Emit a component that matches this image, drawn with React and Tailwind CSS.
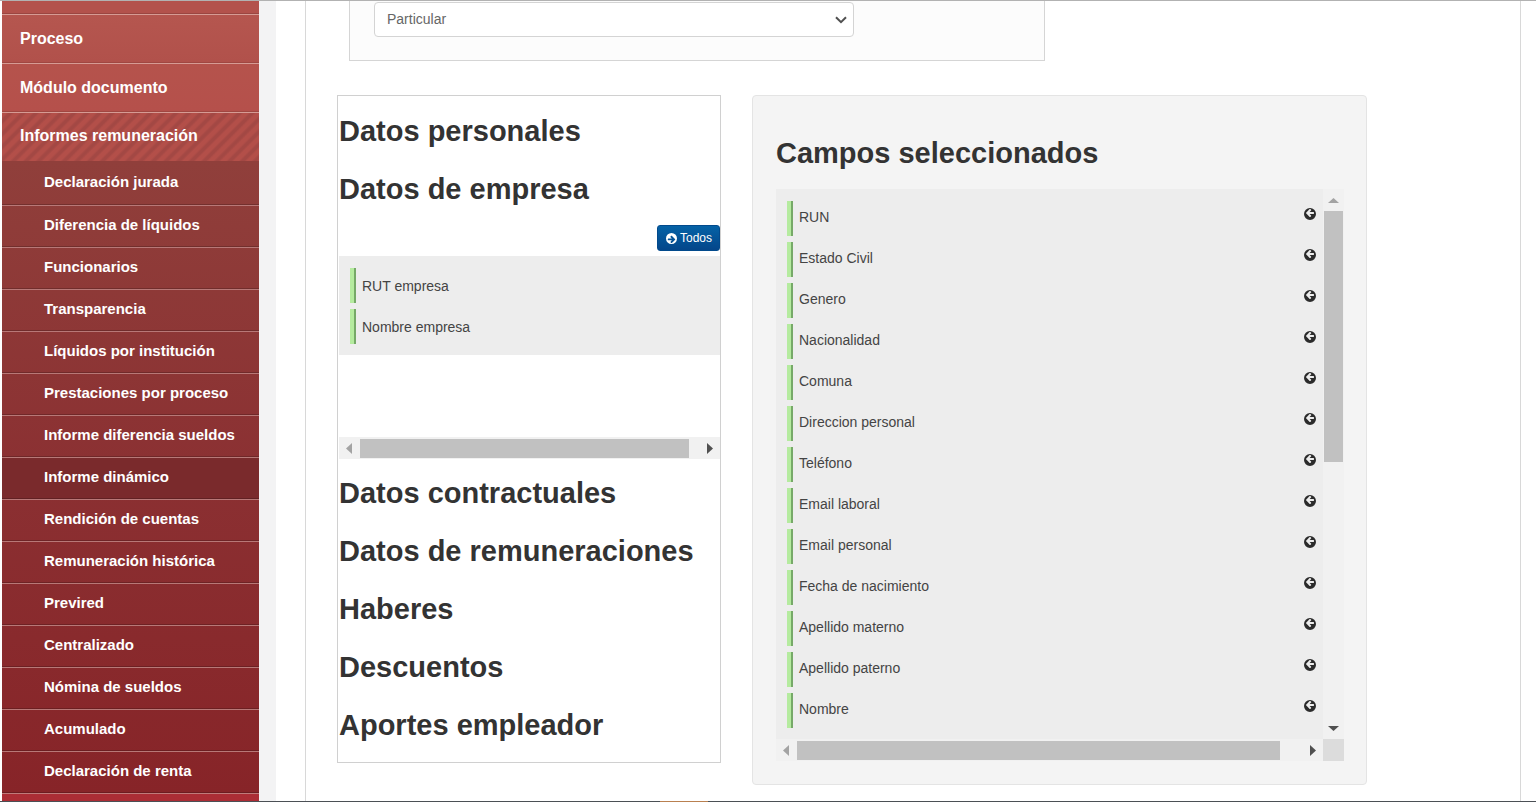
// src/App.jsx
import React from 'react';

const reports = [
  'Declaración jurada',
  'Diferencia de líquidos',
  'Funcionarios',
  'Transparencia',
  'Líquidos por institución',
  'Prestaciones por proceso',
  'Informe diferencia sueldos',
  'Informe dinámico',
  'Rendición de cuentas',
  'Remuneración histórica',
  'Previred',
  'Centralizado',
  'Nómina de sueldos',
  'Acumulado',
  'Declaración de renta',
];

const companyFields = ['RUT empresa', 'Nombre empresa'];

const selectedFields = [
  'RUN',
  'Estado Civil',
  'Genero',
  'Nacionalidad',
  'Comuna',
  'Direccion personal',
  'Teléfono',
  'Email laboral',
  'Email personal',
  'Fecha de nacimiento',
  'Apellido materno',
  'Apellido paterno',
  'Nombre',
];

// Filled circle with a left arrow cut out of it
const CircleArrow = ({ className }) => (
  <svg className={className} viewBox="128 128 1536 1536" fill="currentColor" fillRule="evenodd" aria-hidden="true">
    <path d="M1664 896a768 768 0 1 1-1536 0a768 768 0 1 1 1536 0zM1408 832v-128q0-26-19-45t-45-19h-502l189-189q19-19 19-45t-19-45l-91-91q-18-18-45-18t-45 18l-362 362-91 91q-18 18-18 45t18 45l91 91 362 362q18 18 45 18t45-18l91-91q18-18 18-45t-18-45l-189-189h502q26 0 45-19t19-45z" />
  </svg>
);

const Sidebar = () => (
  <nav className="w-[257px] ml-0.5 shrink-0 flex flex-col font-bold text-white bg-[#b3514b]">
    <div className="h-[13px] shrink-0 bg-[#b3524c] border-b border-[#9b4641]" />
    <a href="#proceso" className="h-[49px] shrink-0 flex items-center pl-[18px] text-base border-t border-t-[#d69b94] border-b border-b-[#a04741] bg-linear-to-b from-[#b5564f] to-[#b1514b]">Proceso</a>
    <a href="#modulo" className="h-[49px] shrink-0 flex items-center pl-[18px] text-base border-t border-t-[#d69b94] border-b border-b-[#a04741] bg-linear-to-b from-[#b5534c] to-[#b5504b]">Módulo documento</a>
    <a href="#informes" className="h-[49px] shrink-0 flex items-center pl-[18px] pb-0.5 text-base border-t border-t-[#d69b94] bg-[repeating-linear-gradient(135deg,#b34f49_0px,#b34f49_3px,#a34844_5px,#a34844_7px,#b34f49_9px)]">Informes remuneración</a>
    <ul className="shrink-0 pt-0.5 bg-linear-to-b from-[#903f3b] via-[#8b3032] to-[#872428]">
      {reports.map((report, i) => (
        <li key={report} className={i === 0 ? '' : 'border-t border-[#b87877]'}>
          <a
            href="#informe"
            className={`flex items-center pl-[42px] pb-0.5 text-[15px] border-b border-black/20 ${i === 0 ? 'h-[42px]' : 'h-[41px]'} ${report === 'Informe dinámico' ? 'bg-[#7a2a2c]' : ''}`}
          >
            {report}
          </a>
        </li>
      ))}
    </ul>
    <div className="flex-1 bg-[#ab2d35] border-t border-[#c07a7a]" />
  </nav>
);

const Arrow = ({ points, color }) => (
  <svg className="w-[11px] h-[11px] shrink-0" viewBox="0 0 11 11" aria-hidden="true">
    <polygon points={points} fill={color} />
  </svg>
);

const HorizontalBar = ({ className, thumb }) => (
  <div className={`h-[22px] flex items-center bg-[#f1f1f1] ${className}`}>
    <div className="w-[21px] shrink-0 flex justify-center">
      <Arrow points="8,0 8,11 2,5.5" color="#a3a3a3" />
    </div>
    <div className="flex-1">
      <div className={`h-[19px] bg-[#c1c1c1] ${thumb}`} />
    </div>
    <div className="w-[21px] shrink-0 flex justify-center">
      <Arrow points="3,0 3,11 9,5.5" color="#505050" />
    </div>
  </div>
);

const Field = ({ name, removable }) => (
  <li className="h-[35px] flex justify-between border-l-4 border-[#b5eb9f]">
    <span className={`flex-1 pl-1.5 text-sm leading-5 text-[#444] border-l-2 border-[#76a968] ${removable ? 'pt-1.5' : 'pt-2'}`}>{name}</span>
    {removable && (
      <button type="button" aria-label={`Quitar ${name}`} className="self-start mt-[7px] mr-[7px] text-[#2b2b2b]">
        <CircleArrow className="w-3 h-3" />
      </button>
    )}
  </li>
);

const Heading = ({ children }) => (
  <h2 className="h-[58px] flex items-center text-[29px] font-bold text-[#333]">{children}</h2>
);

const AvailableFields = () => (
  <section className="self-start h-[668px] pt-[7px] pl-px border border-[#d0d0d0]">
    <Heading>Datos personales</Heading>
    <Heading>Datos de empresa</Heading>
    <div className="h-[246px] pt-1.5">
      <div className="flex justify-end">
        <button type="button" className="h-[26px] pl-2 pr-[7px] flex items-center gap-[3px] rounded-[3px] border border-[#024a8c] bg-linear-to-b from-[#0562a6] to-[#04468a] text-xs text-white">
          <CircleArrow className="w-[11px] h-[11px] rotate-180" />
          Todos
        </button>
      </div>
      <ul className="mt-[5px] h-[99px] pt-3 pl-[11px] flex flex-col gap-1.5 bg-[#ededed]">
        {companyFields.map(name => (
          <Field key={name} name={name} />
        ))}
      </ul>
      <HorizontalBar className="mt-[82px]" thumb="mr-[10px]" />
    </div>
    <Heading>Datos contractuales</Heading>
    <Heading>Datos de remuneraciones</Heading>
    <Heading>Haberes</Heading>
    <Heading>Descuentos</Heading>
    <Heading>Aportes empleador</Heading>
  </section>
);

const SelectedFields = () => (
  <section className="self-start pt-[29px] pb-[23px] pl-[23px] pr-[22px] border border-[#e4e4e4] rounded bg-[#f4f4f4]">
    <Heading>Campos seleccionados</Heading>
    <div className="mt-1.5 flex">
      <div className="flex-1">
        <ul className="pt-3 pb-[11px] pl-[11px] flex flex-col gap-1.5 bg-[#ededed]">
          {selectedFields.map(name => (
            <Field key={name} name={name} removable />
          ))}
        </ul>
        <HorizontalBar className="" thumb="mr-[22px]" />
      </div>
      <div className="w-[21px] flex flex-col bg-[#f1f1f1]">
        <div className="h-[22px] flex items-center justify-center">
          <Arrow points="0,8 11,8 5.5,3" color="#a3a3a3" />
        </div>
        <div className="flex-1">
          <div className="h-[251px] mx-px bg-[#c1c1c1]" />
        </div>
        <div className="h-[22px] flex items-center justify-center">
          <Arrow points="0,3 11,3 5.5,8" color="#505050" />
        </div>
        <div className="h-[22px] bg-[#dcdcdc]" />
      </div>
    </div>
  </section>
);

const App = () => (
  <div className="h-screen flex flex-col overflow-hidden border-t border-[#b2b2b2] bg-white font-['Liberation_Sans',Arial,sans-serif]">
    <div className="flex-1 min-h-0 flex overflow-hidden">
      <Sidebar />
      <div className="w-[17px] shrink-0 bg-[#f3f3f4]" />
      <main className="flex-1 pl-[29px] pr-[15px] flex">
        <div className="flex-1 border-x border-[#d8d8d8]">
          <div className="h-[60px] w-[696px] max-w-full ml-[43px] pl-6 pt-px bg-[#fcfcfc] border border-t-0 border-[#d5d5d5]">
            <div className="relative w-[480px]">
              <select aria-label="Tipo" className="w-full h-[35px] px-3 pb-0.5 appearance-none rounded border border-[#d4d4d4] bg-white text-sm text-[#666]">
                <option>Particular</option>
              </select>
              <svg className="absolute right-[7px] top-[14px] w-[12px] h-[8px] pointer-events-none" viewBox="0 0 12 8" fill="none" stroke="#505050" strokeWidth="2">
                <path d="M1 1.2 6 6.2 11 1.2" />
              </svg>
            </div>
          </div>
          <div className="mt-[34px] pl-[31px] pr-[153px] grid grid-cols-[384fr_615fr] gap-[31px]">
            <AvailableFields />
            <SelectedFields />
          </div>
        </div>
      </main>
    </div>
    <div className="h-px flex bg-[#4b5055]">
      <div className="ml-[43%] w-12 bg-[#b98050]" />
    </div>
  </div>
);

export default App;
